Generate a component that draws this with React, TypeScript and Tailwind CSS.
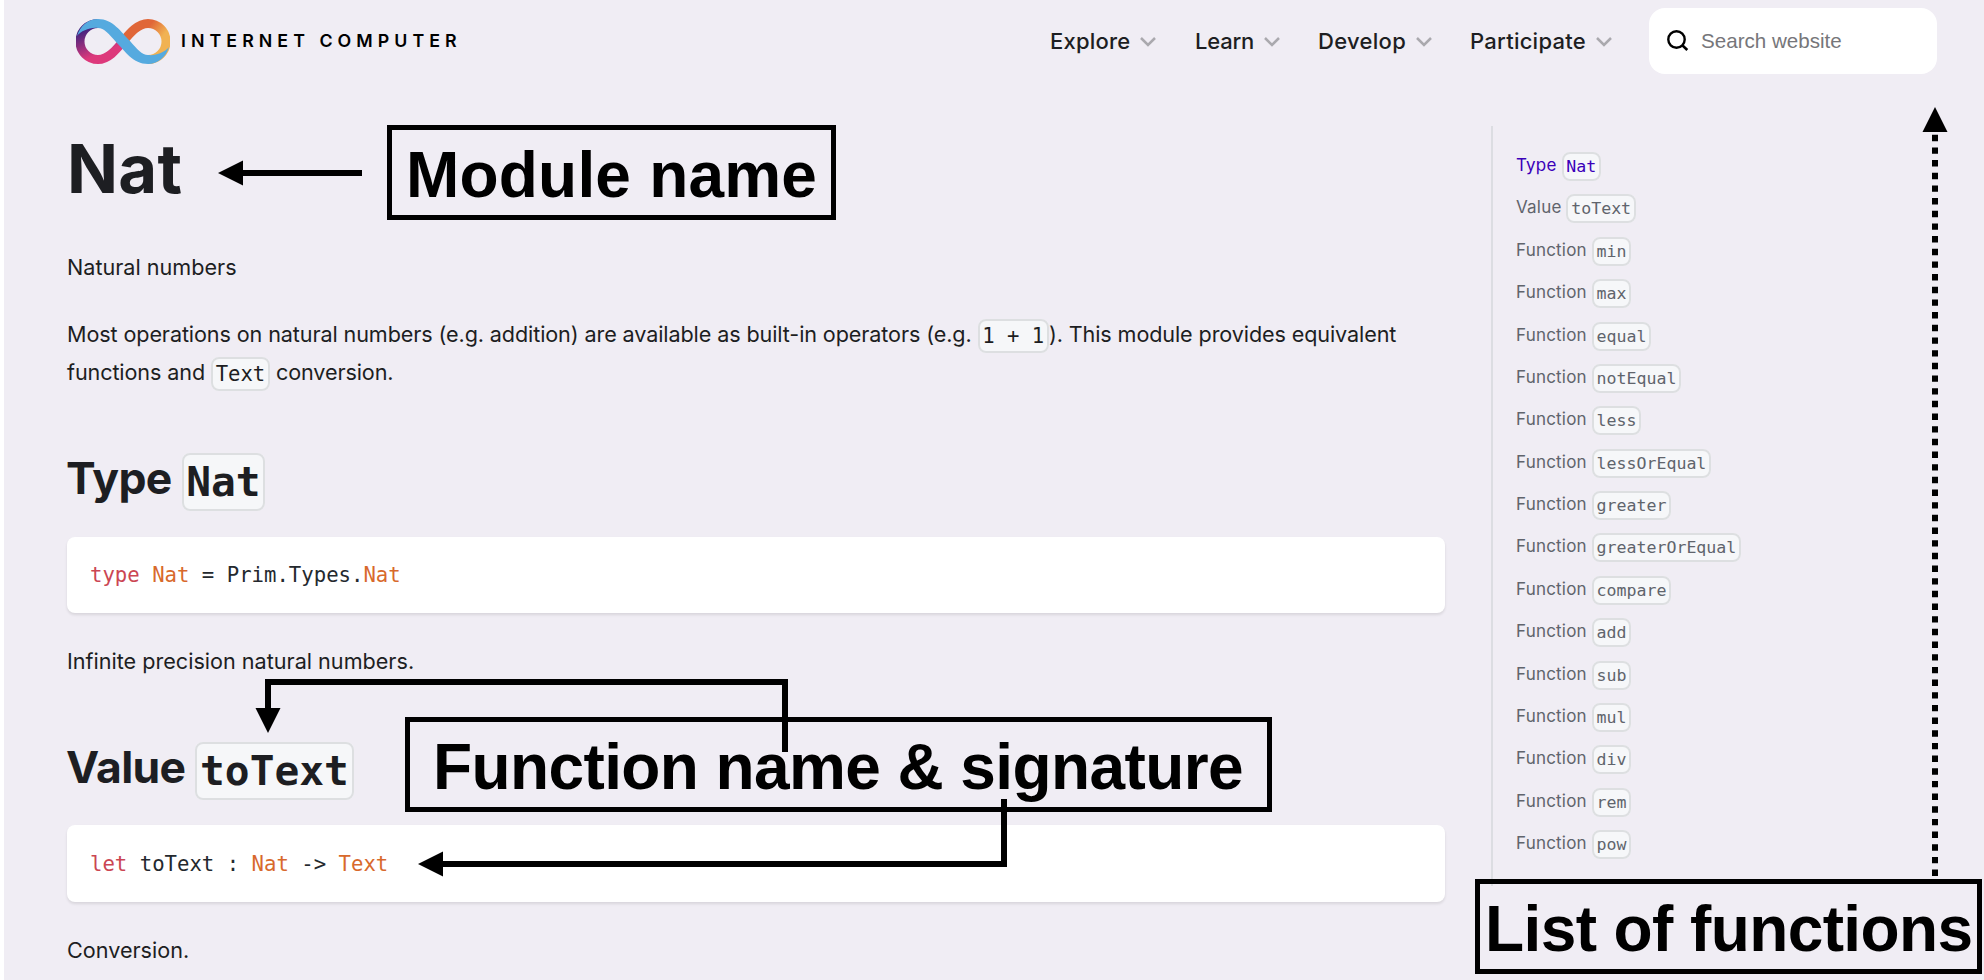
import React from "react";

type CodeSize = "body" | "heading" | "toc";

const codeSizes: Record<CodeSize, string> = {
  body: "text-[20.6px] align-[-1px]",
  heading: "text-[41.2px] align-[-2px] font-bold",
  toc: "text-[16.6px] align-[-1px]",
};

function Code({ children, size = "body" }: { children: React.ReactNode; size?: CodeSize }) {
  return (
    <code
      className={`rounded-lg border-2 border-[#dddfe1] bg-[#f6f7f9] px-[2.7px] py-[3px] font-['DejaVu_Sans_Mono',monospace] leading-none tracking-normal ${codeSizes[size]}`}
    >
      {children}
    </code>
  );
}

function Logo() {
  return (
    <svg width="94" height="45" viewBox="0 0 94 45" fill="none" aria-hidden="true">
      <defs>
        <linearGradient id="left" gradientUnits="userSpaceOnUse" x1="12" y1="6" x2="26" y2="40">
          <stop offset="0.1" stopColor="#46247f" />
          <stop offset="0.85" stopColor="#dd397b" />
        </linearGradient>
        <linearGradient id="right" gradientUnits="userSpaceOnUse" x1="68" y1="6" x2="86" y2="20">
          <stop offset="0.2" stopColor="#e06638" />
          <stop offset="0.95" stopColor="#f1b252" />
        </linearGradient>
      </defs>
      <path d="M22 4.5A18 18 0 0 0 22 40.5C32 40.5 40 31 47 22.5" stroke="url(#left)" strokeWidth="9" />
      <path d="M72 40.5A18 18 0 0 0 72 4.5C62 4.5 54 14 47 22.5" stroke="url(#right)" strokeWidth="9" />
      <path
        d="M1 17C4 7 12 0 22 0C37 0 45 13 54 22C61 30 66 36 72 36C80 37 89 33 93 28C90 38 82 45 72 45C57 45 49 32 40 23C33 15 28 9 22 9C14 8 5 12 1 17Z"
        fill="#55aadf"
      />
    </svg>
  );
}

function NavItem({ label, className }: { label: string; className: string }) {
  return (
    <a className={`flex items-center gap-[10px] text-[22px] font-medium text-[#1d1e22] ${className}`}>
      <span>{label}</span>
      <svg width="16" height="10" viewBox="0 0 16 10" fill="none" className="mt-px">
        <path d="M1 1L8 8L15 1" stroke="#aaa9ae" strokeWidth="2.5" />
      </svg>
    </a>
  );
}

function Header() {
  return (
    <header className="flex h-[82px] items-center pr-[47px] pl-[72px]">
      <Logo />
      <span className="ml-[11px] flex-1 text-[17.8px] font-semibold tracking-[5.05px] text-black">
        INTERNET COMPUTER
      </span>
      <nav className="flex">
        <NavItem label="Explore" className="w-[145px] tracking-[0.2px]" />
        <NavItem label="Learn" className="w-[123px] tracking-[-0.2px]" />
        <NavItem label="Develop" className="w-[152px] tracking-[0.3px]" />
        <NavItem label="Participate" className="w-[179px] tracking-[0.25px]" />
      </nav>
      <div className="flex h-[66px] w-72 items-center gap-3 rounded-2xl bg-white pl-[18px]">
        <svg width="22" height="22" viewBox="0 0 22 22" fill="none">
          <circle cx="9.5" cy="9.5" r="8.2" stroke="black" strokeWidth="2.4" />
          <path d="M15 15L20.3 20" stroke="black" strokeWidth="2.6" />
        </svg>
        <span className="font-['Liberation_Sans',sans-serif] text-[20.6px] text-[#76767a]">Search website</span>
      </div>
    </header>
  );
}

function CodeBlock({ children, className }: { children: React.ReactNode; className: string }) {
  return (
    <pre
      className={`flex items-center rounded-lg bg-white pl-[23px] font-['DejaVu_Sans_Mono',monospace] text-[20.65px] text-[#24292e] shadow-[0_2px_3px_rgba(0,0,0,0.1)] ${className}`}
    >
      <code className="font-['DejaVu_Sans_Mono',monospace]">{children}</code>
    </pre>
  );
}

const toc: [string, string][] = [
  ["Type", "Nat"],
  ["Value", "toText"],
  ["Function", "min"],
  ["Function", "max"],
  ["Function", "equal"],
  ["Function", "notEqual"],
  ["Function", "less"],
  ["Function", "lessOrEqual"],
  ["Function", "greater"],
  ["Function", "greaterOrEqual"],
  ["Function", "compare"],
  ["Function", "add"],
  ["Function", "sub"],
  ["Function", "mul"],
  ["Function", "div"],
  ["Function", "rem"],
  ["Function", "pow"],
];

function TableOfContents() {
  return (
    <ul className="mt-11 ml-[46px] h-[760px] w-[420px] border-l-2 border-[#dcdde2] pt-[18px] pl-[23px]">
      {toc.map(([kind, name], i) => (
        <li
          key={name}
          className={`h-[42.38px] text-[17px] leading-[42.38px] tracking-[0.2px] whitespace-nowrap ${i === 0 ? "text-[#3b00b9]" : "text-[#60646c]"}`}
        >
          {kind} <Code size="toc">{name}</Code>
        </li>
      ))}
    </ul>
  );
}

const label =
  "absolute h-[95px] border-5 border-black font-['Liberation_Sans',sans-serif] text-[64px] font-bold whitespace-nowrap text-black";

function Annotations() {
  return (
    <>
      <svg className="absolute inset-0" width="1984" height="980" viewBox="0 0 1984 980" fill="none">
        <g stroke="black" strokeWidth="6">
          <path d="M362 173H240" />
          <path d="M785 752V682H268V710" />
          <path d="M1004 799V864H440" />
          <path d="M1935 876V132" strokeDasharray="6.4 6.27" />
        </g>
        <g fill="black">
          <path d="M218 173L243 160.5V185.5Z" />
          <path d="M268 733L255.5 708H280.5Z" />
          <path d="M418 864L443 851.5V876.5Z" />
          <path d="M1935 107L1922.5 132H1947.5Z" />
        </g>
      </svg>
      <div className={`${label} top-[125px] left-[387px] w-[449px] pl-[14px] leading-[90px] tracking-[0.2px]`}>
        Module name
      </div>
      <div className={`${label} top-[717px] left-[405px] w-[867px] pl-[23px] leading-[91px] tracking-[-0.6px]`}>
        Function name &amp; signature
      </div>
      <div className={`${label} top-[879px] left-[1475px] w-[507px] pl-[5px] leading-[91px] tracking-[-0.6px]`}>
        List of functions
      </div>
    </>
  );
}

export default function App() {
  return (
    <div className="relative h-[980px] w-[1984px] overflow-hidden bg-white pl-1 font-['Inter',sans-serif] text-[#1d1e22]">
      <div className="h-full bg-[#f0edf4]">
        <Header />
        <div className="flex">
          <main className="ml-[63px] w-[1378px] text-[21.6px] leading-[38px]">
            <h1 className="mt-[47px] text-[67px] leading-[80px] font-bold tracking-[0.3px]">Nat</h1>
            <p className="mt-[39px]">Natural numbers</p>
            <p className="mt-[29px] tracking-[-0.11px]">
              Most operations on natural numbers (e.g. addition) are available as built-in operators (e.g.{" "}
              <Code>1 + 1</Code>). This module provides equivalent
              <br />
              functions and <Code>Text</Code> conversion.
            </p>
            <h2 className="mt-[59px] -ml-px h-14 text-[44.5px] leading-[56px] font-bold tracking-[-0.65px]">
              Type <Code size="heading">Nat</Code>
            </h2>
            <CodeBlock className="mt-[31px] h-[76px]">
              <span className="text-[#cb4653]">type</span> <span className="text-[#d8692c]">Nat</span> = Prim.Types.
              <span className="text-[#d8692c]">Nat</span>
            </CodeBlock>
            <p className="mt-[29px]">Infinite precision natural numbers.</p>
            <h2 className="mt-[59px] -ml-px h-14 text-[44.5px] leading-[56px] font-bold tracking-[-0.65px]">
              Value <Code size="heading">toText</Code>
            </h2>
            <CodeBlock className="mt-[30px] h-[77px]">
              <span className="text-[#cb4653]">let</span> toText : <span className="text-[#d8692c]">Nat</span> {"-> "}
              <span className="text-[#d8692c]">Text</span>
            </CodeBlock>
            <p className="mt-[29px]">Conversion.</p>
          </main>
          <TableOfContents />
        </div>
      </div>
      <Annotations />
    </div>
  );
}
